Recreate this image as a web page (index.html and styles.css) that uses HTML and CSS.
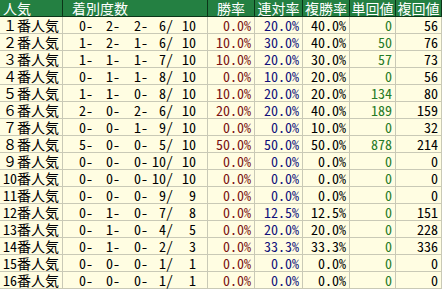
FILE: index.html
```html
<!DOCTYPE html>
<html lang="ja">
<head>
<meta charset="utf-8">
<title>人気別成績</title>
<link rel="stylesheet" href="styles.css">
</head>
<body>
<div class="stats">
  <div class="h name">人気</div>
  <div class="h rec">着別度数</div>
  <div class="h c">勝率</div>
  <div class="h c">連対率</div>
  <div class="h c">複勝率</div>
  <div class="h c">単回値</div>
  <div class="h c">複回値</div>

  <div class="name">１番人気</div><div class="rec"><span>0-</span><span>2-</span><span>2-</span><span>6/</span><span>10</span></div><div class="num win">0.0%</div><div class="num ren">20.0%</div><div class="num">40.0%</div><div class="num tan">0</div><div class="num">56</div>
  <div class="name">２番人気</div><div class="rec"><span>1-</span><span>2-</span><span>1-</span><span>6/</span><span>10</span></div><div class="num win">10.0%</div><div class="num ren">30.0%</div><div class="num">40.0%</div><div class="num tan">50</div><div class="num">76</div>
  <div class="name">３番人気</div><div class="rec"><span>1-</span><span>1-</span><span>1-</span><span>7/</span><span>10</span></div><div class="num win">10.0%</div><div class="num ren">20.0%</div><div class="num">30.0%</div><div class="num tan">57</div><div class="num">73</div>
  <div class="name">４番人気</div><div class="rec"><span>0-</span><span>1-</span><span>1-</span><span>8/</span><span>10</span></div><div class="num win">0.0%</div><div class="num ren">10.0%</div><div class="num">20.0%</div><div class="num tan">0</div><div class="num">56</div>
  <div class="name">５番人気</div><div class="rec"><span>1-</span><span>1-</span><span>0-</span><span>8/</span><span>10</span></div><div class="num win">10.0%</div><div class="num ren">20.0%</div><div class="num">20.0%</div><div class="num tan">134</div><div class="num">80</div>
  <div class="name">６番人気</div><div class="rec"><span>2-</span><span>0-</span><span>2-</span><span>6/</span><span>10</span></div><div class="num win">20.0%</div><div class="num ren">20.0%</div><div class="num">40.0%</div><div class="num tan">189</div><div class="num">159</div>
  <div class="name">７番人気</div><div class="rec"><span>0-</span><span>0-</span><span>1-</span><span>9/</span><span>10</span></div><div class="num win">0.0%</div><div class="num ren">0.0%</div><div class="num">10.0%</div><div class="num tan">0</div><div class="num">32</div>
  <div class="name">８番人気</div><div class="rec"><span>5-</span><span>0-</span><span>0-</span><span>5/</span><span>10</span></div><div class="num win">50.0%</div><div class="num ren">50.0%</div><div class="num">50.0%</div><div class="num tan">878</div><div class="num">214</div>
  <div class="name">９番人気</div><div class="rec"><span>0-</span><span>0-</span><span>0-</span><span>10/</span><span>10</span></div><div class="num win">0.0%</div><div class="num ren">0.0%</div><div class="num">0.0%</div><div class="num tan">0</div><div class="num">0</div>
  <div class="name">10番人気</div><div class="rec"><span>0-</span><span>0-</span><span>0-</span><span>10/</span><span>10</span></div><div class="num win">0.0%</div><div class="num ren">0.0%</div><div class="num">0.0%</div><div class="num tan">0</div><div class="num">0</div>
  <div class="name">11番人気</div><div class="rec"><span>0-</span><span>0-</span><span>0-</span><span>9/</span><span>9</span></div><div class="num win">0.0%</div><div class="num ren">0.0%</div><div class="num">0.0%</div><div class="num tan">0</div><div class="num">0</div>
  <div class="name">12番人気</div><div class="rec"><span>0-</span><span>1-</span><span>0-</span><span>7/</span><span>8</span></div><div class="num win">0.0%</div><div class="num ren">12.5%</div><div class="num">12.5%</div><div class="num tan">0</div><div class="num">151</div>
  <div class="name">13番人気</div><div class="rec"><span>0-</span><span>1-</span><span>0-</span><span>4/</span><span>5</span></div><div class="num win">0.0%</div><div class="num ren">20.0%</div><div class="num">20.0%</div><div class="num tan">0</div><div class="num">228</div>
  <div class="name">14番人気</div><div class="rec"><span>0-</span><span>1-</span><span>0-</span><span>2/</span><span>3</span></div><div class="num win">0.0%</div><div class="num ren">33.3%</div><div class="num">33.3%</div><div class="num tan">0</div><div class="num">336</div>
  <div class="name">15番人気</div><div class="rec"><span>0-</span><span>0-</span><span>0-</span><span>1/</span><span>1</span></div><div class="num win">0.0%</div><div class="num ren">0.0%</div><div class="num">0.0%</div><div class="num tan">0</div><div class="num">0</div>
  <div class="name">16番人気</div><div class="rec"><span>0-</span><span>0-</span><span>0-</span><span>1/</span><span>1</span></div><div class="num win">0.0%</div><div class="num ren">0.0%</div><div class="num">0.0%</div><div class="num tan">0</div><div class="num">0</div>
</div>
</body>
</html>
```

FILE: styles.css
```css
html, body {
  margin: 0;
  padding: 0;
  background: #ffffff;
}

.stats {
  display: grid;
  grid-template-columns: 63px 145px 47px 48px 47px 46px 46px;
  grid-auto-rows: 17px;
  width: 442px;
  font-family: "Noto Sans Mono CJK JP", "Noto Sans CJK JP", "DejaVu Sans Mono", monospace;
  font-size: 14px;
  line-height: 16px;
  color: #000000;
}

.stats > div {
  box-sizing: border-box;
  background: #fffde2;
  border-right: 1px solid #c9c9b6;
  border-bottom: 1px solid #c9c9b6;
  white-space: nowrap;
}

.stats > .h {
  background: #248042;
  color: #ffffff;
  border-right: 1px solid #0b3518;
  border-bottom: 1px solid #0b3518;
}

.name {
  padding-left: 3px;
}

.h.rec {
  padding-left: 9px;
}

.h.c {
  text-align: center;
}

.rec {
  display: flex;
}

.rec span {
  text-align: right;
}

.rec span:nth-child(1) { width: 30px; }
.rec span:nth-child(2) { width: 27px; }
.rec span:nth-child(3) { width: 28px; }
.rec span:nth-child(4) { width: 25px; }
.rec span:nth-child(5) { width: 23px; }

.num {
  text-align: right;
  padding-right: 3px;
}

.win { color: #7a1010; }
.ren { color: #10107a; }
.tan { color: #267a26; }
```
